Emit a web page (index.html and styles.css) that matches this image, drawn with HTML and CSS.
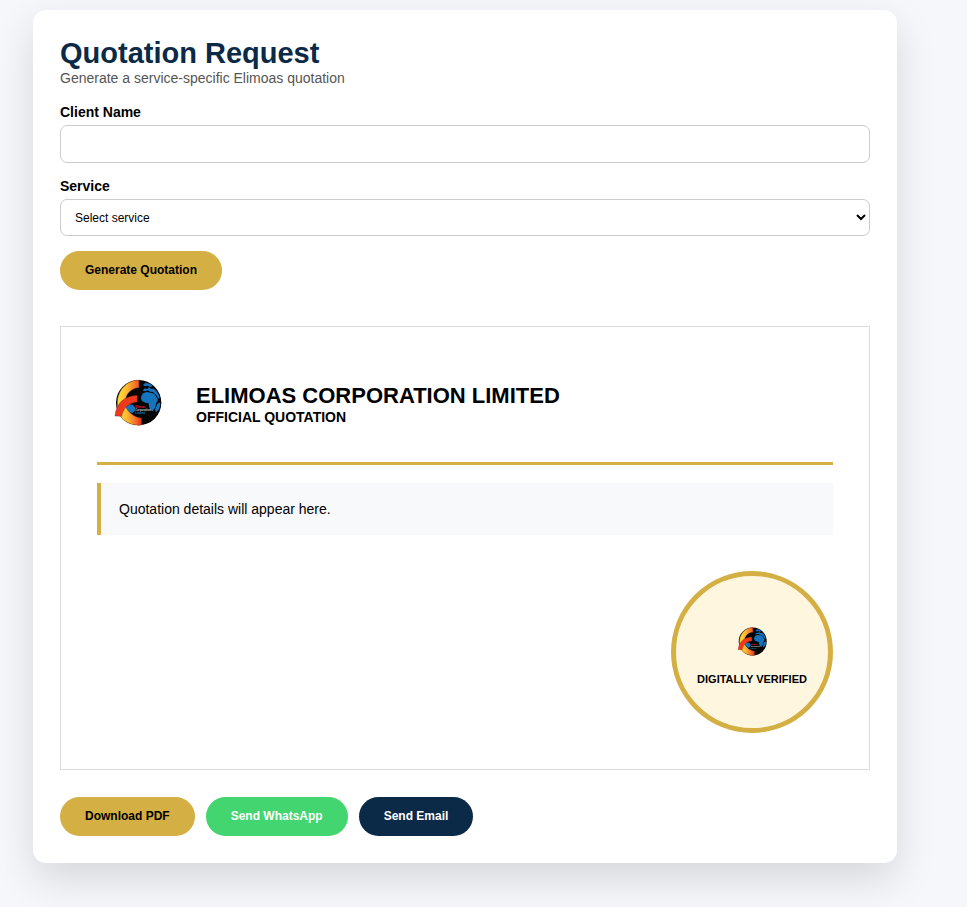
FILE: index.html
```html
<!DOCTYPE html>
<html lang="en">
<head>
<meta charset="utf-8">
<meta name="viewport" content="width=device-width, initial-scale=1">
<title>Quotation Request</title>
<link rel="stylesheet" href="styles.css">
</head>
<body>
<svg class="defs" aria-hidden="true">
  <defs>
    <linearGradient id="flame" gradientUnits="userSpaceOnUse" x1="50" y1="0" x2="126" y2="0">
      <stop offset="0" stop-color="#ffe23c"/>
      <stop offset=".4" stop-color="#fdb92f"/>
      <stop offset=".75" stop-color="#f5702a"/>
      <stop offset="1" stop-color="#e8251f"/>
    </linearGradient>
    <symbol id="logo" viewBox="-9 -21 243 243">
      <circle cx="116" cy="98" r="68" fill="#050505"/>
      <path d="M117 30C82 30 55 58 52 94L52 112C54 145 86 170 125 165V144C102 142 84 128 76 105C73 78 88 55 117 53Z" fill="url(#flame)" stroke="#3a2a16" stroke-width="1"/>
      <path d="M75 107L84 102L98 104L105 112V122L96 130C86 125 79 117 75 107Z" fill="#1673bd"/>
      <path d="M124 78L130 69L141 66L153 68L163 71L168 79L174 90L169 98L166 112L158 124L151 121L147 110L146 100L136 98L127 94L123 87Z" fill="#1673bd"/>
      <path d="M128 62L134 55L142 57L147 52L154 57L161 56L169 63L176 74L179 86L174 84L167 73L158 66L150 65L143 61L137 64Z" fill="#1673bd"/>
      <path d="M129 44L137 38L149 41L158 47L152 51L143 47L135 49ZM172 101L180 97L181 106L176 119L168 127L165 119Z" fill="#1673bd"/>
      <path d="M45 138C48 101 73 77 112 76V96C87 98 69 114 65 139Z" fill="#f0381d" stroke="#451b10" stroke-width="1"/>
      <g class="logo-text">
        <text x="106" y="115" fill="#e5183c">Elimoas</text>
        <text x="106" y="124" fill="#ccc">Corporation</text>
        <text x="106" y="133" fill="#1b80c8">Limited</text>
      </g>
    </symbol>
  </defs>
</svg>
<main class="card">
  <h1>Quotation Request</h1>
  <p class="subtitle">Generate a service-specific Elimoas quotation</p>
  <form class="request">
    <div class="field">
      <label for="client">Client Name</label>
      <input id="client" type="text">
    </div>
    <div class="field">
      <label for="service">Service</label>
      <select id="service"><option>Select service</option></select>
    </div>
    <button class="btn gold" type="button">Generate Quotation</button>
  </form>
  <section class="preview">
    <header class="letterhead">
      <svg class="logo" role="img" aria-label="Elimoas logo"><use href="#logo"/></svg>
      <div>
        <h2>ELIMOAS CORPORATION LIMITED</h2>
        <strong>OFFICIAL QUOTATION</strong>
      </div>
    </header>
    <div class="details">Quotation details will appear here.</div>
    <div class="stamp">
      <svg class="stamp-logo" aria-hidden="true"><use href="#logo"/></svg>
      <span>DIGITALLY VERIFIED</span>
    </div>
  </section>
  <div class="actions">
    <button class="btn gold" type="button">Download PDF</button>
    <button class="btn green" type="button">Send WhatsApp</button>
    <button class="btn navy" type="button">Send Email</button>
  </div>
</main>
</body>
</html>
```
FILE: styles.css
```css
* { box-sizing: border-box; }
body {
  margin: 0;
  padding: 10px 70px 44px 33px;
  background: #f5f7fb;
  color: #000;
  font: 14px/16px "Liberation Sans", Arial, sans-serif;
}
h1, h2, p { margin: 0; }
.defs { position: absolute; width: 0; height: 0; }
.logo-text { font: bold 8px "Liberation Sans", Arial, sans-serif; }
.card {
  max-width: 864px;
  margin: 0 auto;
  padding: 27px;
  border-radius: 13px;
  background: #fff;
  box-shadow: 0 16px 40px rgba(0, 0, 0, .13);
}
h1 {
  color: #0b2a47;
  font-size: 29px;
  line-height: 33px;
}
.subtitle { color: #555; }
.request {
  display: flex;
  flex-direction: column;
  align-items: flex-start;
  gap: 15px;
  margin-top: 18px;
}
.field {
  display: flex;
  flex-direction: column;
  gap: 5px;
  width: 100%;
}
label { font-weight: bold; }
input, select {
  width: 100%;
  height: 38px;
  padding: 0 10px;
  border: 1px solid #ccc;
  border-radius: 7px;
  background: #fff;
  color: #000;
  font: 12px "Liberation Sans", Arial, sans-serif;
}
select { height: 37px; }
.btn {
  height: 39px;
  padding: 0 25px 2px;
  border: 0;
  border-radius: 20px;
  font: bold 12px "Liberation Sans", Arial, sans-serif;
}
.gold { background: #d4af43; color: #000; }
.green { background: #43d56f; color: #fff; }
.navy { background: #0b2a47; color: #fff; }
.preview {
  margin-top: 36px;
  padding: 36px;
  border: 1px solid #ddd;
}
.letterhead {
  display: flex;
  align-items: center;
  gap: 18px;
  padding-bottom: 18px;
  border-bottom: 3px solid #d4af43;
}
.logo { width: 81px; height: 81px; }
h2 { font-size: 22px; line-height: 26px; }
strong { display: block; }
.details {
  margin-top: 18px;
  padding: 18px;
  border-left: 4px solid #d4af43;
  background: #f8f9fb;
}
.stamp {
  display: flex;
  flex-direction: column;
  align-items: center;
  justify-content: center;
  gap: 4px;
  width: 162px;
  height: 162px;
  margin: 36px 0 0 auto;
  border: 5px solid #d4af43;
  border-radius: 50%;
  background: #fff6df;
  font-size: 11px;
  font-weight: bold;
}
.stamp-logo { width: 50px; height: 50px; }
.actions {
  display: flex;
  flex-wrap: wrap;
  gap: 11px;
  margin-top: 27px;
}
```
